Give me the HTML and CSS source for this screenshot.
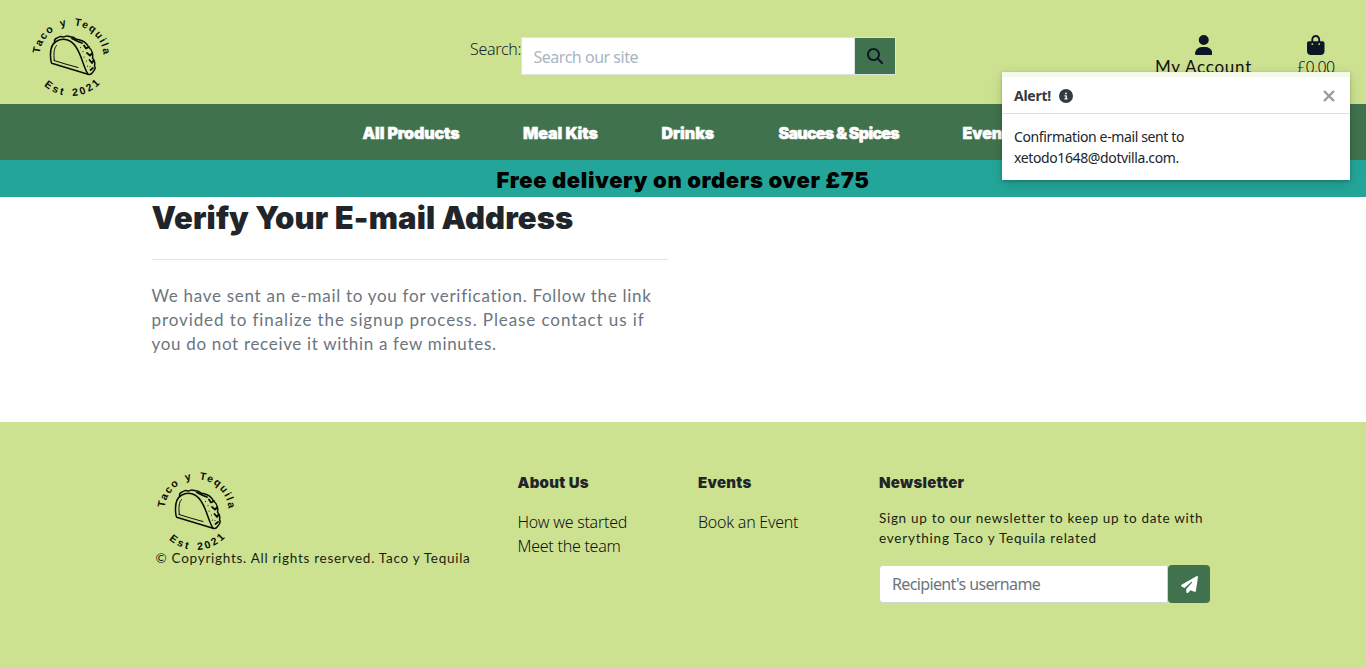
FILE: index.html
```html
<!DOCTYPE html>
<html lang="en">
<head>
<meta charset="utf-8">
<title>Taco y Tequila</title>
<link rel="stylesheet" href="styles.css">
</head>
<body>
<svg class="defs" width="0" height="0" aria-hidden="true">
  <defs>
    <path id="arc-top" d="M10.7 39.7 A32 32 0 0 1 74.5 43"/>
    <path id="arc-bottom" d="M2 42 A40 40 0 0 0 82 42"/>
    <symbol id="logo" viewBox="0 0 84 84" overflow="visible">
      <text class="logo-text"><textPath href="#arc-top" textLength="94">Taco y Tequila</textPath></text>
      <text class="logo-text"><textPath href="#arc-bottom" startOffset="33" textLength="62">Est 2021</textPath></text>
      <g fill="none" stroke="#0a0c06" stroke-linecap="round" stroke-linejoin="round">
        <path stroke-width="1.5" d="M22 47.5C20.5 37 22 30.5 27 27.5C34 23.5 42 25 47 33C53 42 54 52 59 60.2L22.7 49.2Z"/>
        <path stroke-width="1" d="M25.3 46.5C24.5 39 25 34 27.5 31.5M25 46.5L37 50.2L49 53.5"/>
        <path stroke-width="1.5" d="M25.5 27.5C25 24 28 24.5 30 23C32 21.5 34 24 36 22.5C38 21 40 22.5 42 23C46 22.5 45 25.5 49 25.5C55 26.5 58 30 59.5 33C64 36 64 42 63.5 44C66 47 66 50 65.5 52C67 54 65 57 63.5 58.5C62 61 60 60.5 59 60.2"/>
        <path stroke-width="1.8" d="M43 24.5L49 27.5L53 29M55 31.5L57 34.5L60 33M58 39L61 41.5L63 39.5M60.5 46L63 49L64.5 46.5M61.5 56L64 54"/>
        <path stroke-width="1.1" d="M51.5 33.5v.1M54 37.5v.1M55 43v.1M57.5 47v.1M58.5 52v.1M61 52.5v.1"/>
      </g>
    </symbol>
  </defs>
</svg>

<header class="top">
  <a class="brand"><svg class="logo"><use href="#logo"/></svg></a>
  <form class="search">
    <label class="search-label">Search:</label>
    <div class="search-box">
      <div class="search-field">Search our site</div>
      <div class="search-btn"><svg width="16" height="16" viewBox="0 0 512 512" fill="#0b1727"><path d="M416 208c0 45.9-14.9 88.3-40 122.7L502.6 457.4c12.5 12.5 12.5 32.8 0 45.3s-32.8 12.5-45.3 0L330.7 376c-34.4 25.2-76.8 40-122.7 40C93.1 416 0 322.9 0 208S93.1 0 208 0S416 93.1 416 208zM208 352a144 144 0 1 0 0-288 144 144 0 1 0 0 288z"/></svg></div>
    </div>
  </form>
  <div class="account">
    <a class="acc-item"><svg width="17.5" height="20" viewBox="0 0 448 512"><path d="M224 256A128 128 0 1 0 224 0a128 128 0 1 0 0 256zm-45.7 48C79.8 304 0 383.8 0 482.3C0 498.7 13.3 512 29.7 512H418.3c16.4 0 29.7-13.3 29.7-29.7C448 383.8 368.2 304 269.7 304H178.3z"/></svg><span class="acc-name">My Account</span></a>
    <a class="acc-item"><svg width="17.5" height="20" viewBox="0 0 448 512"><path d="M160 112c0-35.3 28.7-64 64-64s64 28.7 64 64v48H160V112zm-48 48H48c-26.5 0-48 21.5-48 48V416c0 53 43 96 96 96H352c53 0 96-43 96-96V208c0-26.5-21.5-48-48-48H336V112C336 50.1 285.9 0 224 0S112 50.1 112 112v48zm24 48a24 24 0 1 1 0 48 24 24 0 1 1 0-48zm152 24a24 24 0 1 1 48 0 24 24 0 1 1 -48 0z"/></svg><span class="acc-total">£0.00</span></a>
  </div>
</header>

<nav class="nav">
  <a class="n-all">All Products</a><a class="n-kits">Meal Kits</a><a class="n-drinks">Drinks</a><a class="n-sauces">Sauces &amp; Spices</a><a>Events</a>
</nav>
<div class="banner">Free delivery on orders over £75</div>

<main class="main">
  <section class="verify">
    <h1>Verify Your E-mail Address</h1>
    <hr>
    <p><span class="v1">We have sent an e-mail to you for verification. Follow the link</span><br><span class="v2">provided to finalize the signup process. Please contact us if</span><br><span class="v3">you do not receive it within a few minutes.</span></p>
  </section>
</main>

<footer class="footer">
  <div class="f-brand">
    <svg class="logo"><use href="#logo"/></svg>
    <p>© Copyrights. All rights reserved. Taco y Tequila</p>
  </div>
  <div class="f-about">
    <h2>About Us</h2>
    <a>How we started</a>
    <a>Meet the team</a>
  </div>
  <div class="f-events">
    <h2>Events</h2>
    <a>Book an Event</a>
  </div>
  <div class="f-news">
    <h2>Newsletter</h2>
    <p>Sign up to our newsletter to keep up to date with<br><span class="news-2">everything Taco y Tequila related</span></p>
    <div class="subscribe">
      <div class="sub-field">Recipient's username</div>
      <div class="sub-btn"><svg width="17" height="17" viewBox="0 0 512 512" fill="#fff"><path d="M498.1 5.6c10.1 7 15.4 19.1 13.5 31.2l-64 416c-1.5 9.7-7.4 18.2-16 23s-18.9 5.4-28 1.6L284 427.7l-68.5 74.1c-8.9 9.7-22.9 12.9-35.2 8.1S160 493.2 160 480V396.4c0-4 1.5-7.8 4.2-10.7L331.8 202.8c5.8-6.3 5.6-16-.4-22s-15.7-6.4-22-.7L106 360.8 17.7 316.6C7.1 311.3 .3 300.7 0 288.9s5.9-22.8 16.1-28.7l448-256c10.7-6.1 23.9-5.5 34 1.4z"/></svg></div>
    </div>
  </div>
</footer>

<div class="toast">
  <div class="toast-strip"></div>
  <div class="toast-head">
    <strong>Alert!</strong>
    <svg class="info" width="14" height="14" viewBox="0 0 512 512" fill="#343a40"><path d="M256 512A256 256 0 1 0 256 0a256 256 0 1 0 0 512zM216 336h24V272H216c-13.3 0-24-10.7-24-24s10.7-24 24-24h48c13.3 0 24 10.7 24 24v88h8c13.3 0 24 10.7 24 24s-10.7 24-24 24H216c-13.3 0-24-10.7-24-24s10.7-24 24-24zm40-208a32 32 0 1 1 0 64 32 32 0 1 1 0-64z"/></svg>
    <svg class="close" width="12" height="12" viewBox="0 0 12 12"><path d="M1 1L11 11M11 1L1 11" stroke="#999b9d" stroke-width="2.4"/></svg>
  </div>
  <div class="toast-body">Confirmation e-mail sent to<br>xetodo1648@dotvilla.com.</div>
</div>
</body>
</html>
```
FILE: styles.css
```css
* { box-sizing: border-box; }
body {
  margin: 0;
  height: 667px;
  overflow: hidden;
  position: relative;
  background: #fff;
  color: #212529;
  font-family: "Noto Sans", "Open Sans", sans-serif;
  font-size: 16px;
  line-height: 24px;
  white-space: nowrap;
}
h1, h2, p { margin: 0; }
svg { display: block; flex: none; }
.defs { position: absolute; }

.logo { width: 84px; height: 84px; overflow: visible; }
.logo-text {
  font: 700 10.5px "Liberation Sans Narrow", "Liberation Sans", sans-serif;
  word-spacing: 2px;
  fill: #0a0c06;
}

.top {
  display: grid;
  grid-template-columns: 470px 1fr 228px;
  height: 104px;
  background: #cce291;
}
.brand { padding: 14px 0 0 29px; }
.search { display: flex; padding-top: 37px; }
.search-label { width: 51px; font-weight: 300; letter-spacing: -0.3px; }
.search-box {
  display: flex;
  width: 375px;
  height: 38px;
  background: #fff;
  border: 1px solid #dee2e6;
}
.search-field {
  flex: 1;
  padding: 7px 0 0 11.5px;
  color: #a9b5c3;
  letter-spacing: -0.48px;
}
.search-btn {
  display: flex;
  align-items: center;
  justify-content: center;
  width: 41px;
  border-left: 1px solid #dee2e6;
  background: #40734d;
}
.account { display: flex; padding: 34.5px 0 0 17px; gap: 45px; }
.acc-item {
  display: flex;
  flex-direction: column;
  align-items: center;
  color: #111;
  fill: #0b1727;
}
.acc-name { width: 97px; font: 400 17px/24px Lato, sans-serif; letter-spacing: 0.75px; }
.acc-total { width: 38px; font-weight: 300; letter-spacing: -0.6px; }

.nav {
  display: flex;
  height: 56px;
  padding-left: 362.5px;
  background: #40734d;
  color: #fff;
  font: 900 16px/58px Inter, sans-serif;
  -webkit-text-stroke: 0.5px #fff;
}
.n-all { width: 160.5px; letter-spacing: -0.12px; }
.n-kits { width: 138.5px; letter-spacing: -0.05px; }
.n-drinks { width: 117px; }
.n-sauces { width: 184px; letter-spacing: -0.72px; }

.banner {
  height: 37px;
  background: #23a699;
  color: #000;
  text-align: center;
  font: 900 22px/40px Inter, sans-serif;
  letter-spacing: 0.59px;
}

.main { height: 225px; padding: 0 151.5px; }
.verify { width: 516px; }
.verify h1 {
  padding: 1px 0;
  font: 900 31px/40px Inter, sans-serif;
  letter-spacing: 0.12px;
}
.verify hr { margin: 20px 0 24px; border: 0; border-top: 1px solid #e3e4e4; }
.verify p { color: #6c757d; font: 400 17px/24px Lato, sans-serif; }
.v1 { letter-spacing: 0.71px; }
.v2 { letter-spacing: 0.91px; }
.v3 { letter-spacing: 0.68px; }

.footer {
  display: grid;
  grid-template-columns: 362px 180.5px 181px 331px;
  height: 245px;
  padding: 46px 0 0 155.5px;
  background: #cce291;
}
.footer h2 {
  padding: 5px 0 17px;
  font: 900 15px/20px Inter, sans-serif;
  letter-spacing: 0.25px;
}
.footer a {
  display: block;
  color: #111;
  font-weight: 300;
  letter-spacing: -0.25px;
}
.footer p { color: #1a1d12; font: 400 13.5px/20px Lato, sans-serif; letter-spacing: 0.7px; }
.f-brand .logo { margin-left: -1.5px; }
.f-brand p { margin-top: -4px; letter-spacing: 0.72px; }
.f-news p { margin-top: -2px; }
.f-news .news-2 { letter-spacing: 0.78px; }
.subscribe { display: flex; align-items: center; margin-top: 17px; }
.sub-field {
  width: 289px;
  height: 38px;
  padding: 6px 0 0 12px;
  border: 1px solid #ced4da;
  border-radius: 4px 0 0 4px;
  background: #fff;
  color: #6c757d;
  letter-spacing: -0.63px;
}
.sub-btn {
  display: flex;
  align-items: center;
  justify-content: center;
  width: 42px;
  height: 38px;
  border-radius: 4px;
  background: #40734d;
}

.toast {
  position: absolute;
  top: 72px;
  left: 1002px;
  width: 348px;
  height: 108px;
  background: #fff;
  box-shadow: 0 4px 12px rgba(0, 0, 0, 0.15), 0 1px 3px rgba(0, 0, 0, 0.2);
  font-size: 14px;
  line-height: 21px;
}
.toast-strip { height: 5px; background: #f5f9e9; }
.toast-head {
  display: flex;
  align-items: center;
  gap: 8px;
  height: 37px;
  padding: 0 15px 0 12px;
  border-bottom: 1px solid #dee0e2;
  color: #343a40;
}
.toast-head strong { width: 37px; letter-spacing: -0.25px; }
.info { margin-top: 1px; }
.close { margin: 1px 0 0 auto; }
.toast-body { padding: 12px; letter-spacing: -0.38px; }
```
